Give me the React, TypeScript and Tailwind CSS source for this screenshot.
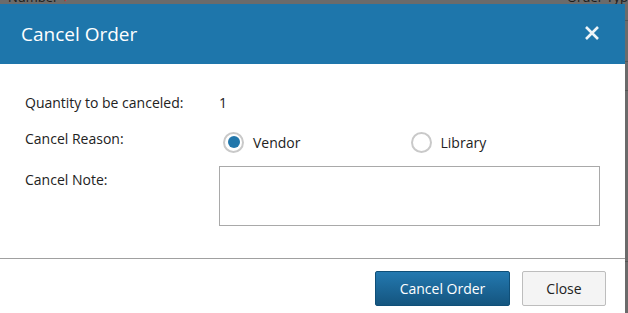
import React from "react";

function Radio({ checked }: { checked: boolean }) {
  return (
    <span className="flex h-[21px] w-[21px] items-center justify-center rounded-full border-2 border-[#c9c9c9] bg-white">
      {checked && <span className="h-[12px] w-[12px] rounded-full bg-[#2277ab]" />}
    </span>
  );
}

export default function App() {
  const font = { fontFamily: '"Open Sans", "Noto Sans", sans-serif' };
  return (
    <div className="relative h-[313px] w-[628px] overflow-hidden bg-[#6b6b6b]" style={font}>
      <div className="flex h-[4px] items-end overflow-visible text-[13px] leading-none text-[#1a1a1a]">
        <span className="-mt-[10px] ml-[8px] h-[4px] overflow-hidden">
          <span className="block -translate-y-[9px]">Number <span className="text-[#b33]">▾</span></span>
        </span>
        <span className="-mt-[10px] ml-auto mr-[0px] h-[4px] overflow-hidden">
          <span className="block -translate-y-[9px]">Order Typ</span>
        </span>
      </div>
      <div className="flex h-[309px]">
        <div className="flex w-[625px] flex-col bg-white">
          <div className="flex h-[60px] items-center justify-between bg-[#1e76ab] pl-[21px] pr-[25px]">
            <span className="text-[19px] text-white">Cancel Order</span>
            <svg width="16" height="16" viewBox="0 0 16 16" className="mb-[2px]">
              <path d="M2 2 L14 14 M14 2 L2 14" stroke="#eef4f8" strokeWidth="2.6" strokeLinecap="butt" />
            </svg>
          </div>
          <div className="flex flex-col px-[25px] pt-[26px] text-[14px] text-[#222]">
            <div className="flex h-[24px] items-center">
              <span className="w-[194px]">Quantity to be canceled:</span>
              <span>1</span>
            </div>
            <div className="mt-[12px] flex h-[24px] items-center">
              <span className="w-[198px] self-start pt-[2px]">Cancel Reason:</span>
              <div className="flex items-center gap-[9px] pt-[8px]">
                <Radio checked />
                <span>Vendor</span>
              </div>
              <div className="ml-[110px] flex items-center gap-[9px] pt-[8px]">
                <Radio checked={false} />
                <span>Library</span>
              </div>
            </div>
            <div className="mt-[16px] flex">
              <span className="w-[194px] pt-[3px]">Cancel Note:</span>
              <div className="h-[60px] w-[381px] border border-[#a9a9a9]" />
            </div>
          </div>
          <div className="mt-[32px] border-t border-[#a0a0a0]" />
          <div className="flex justify-end gap-[12px] pr-[19px] pt-[12px]">
            <button className="h-[35px] w-[135px] rounded-[2px] border border-[#0f4f78] bg-gradient-to-b from-[#2479b0] to-[#14557f] text-[14px] text-white">
              Cancel Order
            </button>
            <button className="h-[35px] w-[84px] rounded-[2px] border border-[#bdbdbd] bg-[#f4f4f4] text-[14px] text-[#222]">
              Close
            </button>
          </div>
        </div>
        <div className="flex flex-1 flex-col bg-[#6b6b6b]">
          <div className="mt-[16px] border-t border-[#555]" />
          <div className="mt-[40px] border-t border-[#555]" />
          <div className="mt-[28px] border-t border-[#555]" />
          <div className="mt-[170px] border-t border-[#555]" />
        </div>
      </div>
    </div>
  );
}
